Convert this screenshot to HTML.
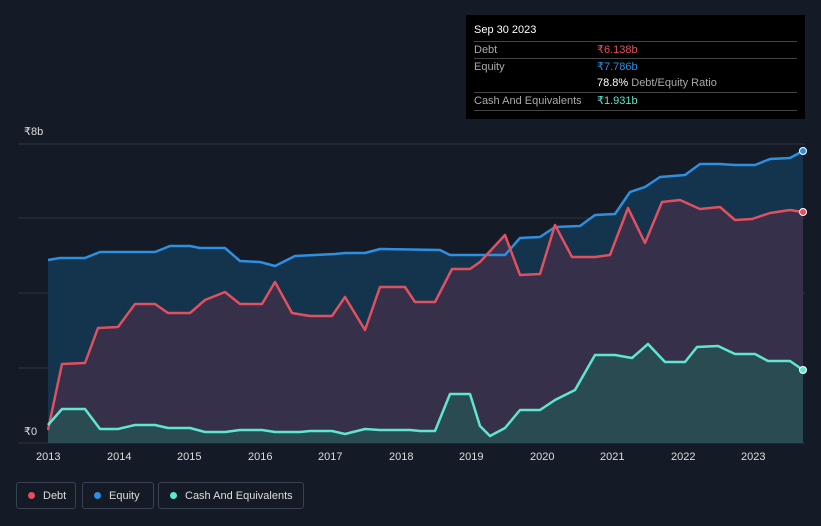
<!DOCTYPE html><html><head><style>
body{margin:0;width:821px;height:526px;background:#151b26;font-family:"Liberation Sans",sans-serif;overflow:hidden;position:relative}
.tt{position:absolute;left:466px;top:15px;width:339px;height:104px;background:#000;color:#fff;font-size:11px}
.tt .r{position:absolute;left:8px;right:8px;border-top:1px solid #444;height:17px;line-height:17px;color:#aaa}
.tt .r b{position:absolute;left:123px;font-weight:normal}
.lg{position:absolute;top:482px;height:27px;border:1px solid #3a4150;border-radius:3px;color:#ddd;font-size:11px;line-height:27px;box-sizing:border-box}
.lg i{display:inline-block;width:7px;height:7px;border-radius:50%;margin:0 8px 0 11px}
.ax{position:absolute;color:#ddd;font-size:11px}
</style></head><body>
<svg width="821" height="526" style="position:absolute;left:0;top:0">
<g stroke="#2c3340" stroke-width="1"><line x1="18" y1="144" x2="805" y2="144"/><line x1="18" y1="218" x2="805" y2="218"/><line x1="18" y1="293" x2="805" y2="293"/><line x1="18" y1="368" x2="805" y2="368"/><line x1="18" y1="443" x2="805" y2="443"/></g>
<polygon fill="#14334d" points="48,443 48,260 60,258 85,258 100,252 155,252 170,246 190,246 200,248 225,248 240,261 260,262 275,266 295,256 335,254 345,253 365,253 380,249 440,250 450,255 505,255 520,238 540,237 555,227 580,226 595,215 615,214 630,192 645,187 660,177 685,175 700,164 720,164 735,165 755,165 770,159 790,158 803,151 803,443"/>
<polygon fill="#36304a" points="48,443 48,430 62,364 85,363 98,328 118,327 135,304 155,304 168,313 190,313 205,300 225,292 240,304 262,304 275,282 292,313 310,316 332,316 345,297 365,330 380,287 405,287 415,302 435,302 452,269 470,269 480,262 505,235 520,275 540,274 555,225 572,257 595,257 610,255 628,208 645,243 662,202 680,200 700,209 720,207 735,220 752,219 770,213 790,210 803,212 803,443"/>
<polygon fill="#2a4b52" points="48,443 48,425 62,409 85,409 100,429 118,429 135,425 155,425 168,428 190,428 205,432 225,432 240,430 262,430 275,432 300,432 310,431 332,431 345,434 365,429 380,430 410,430 420,431 435,431 450,394 470,394 480,426 490,436 505,428 520,410 540,410 555,400 575,390 595,355 615,355 632,358 648,344 665,362 685,362 697,347 718,346 735,354 755,354 768,361 790,361 803,370 803,443"/>
<g fill="none" stroke-width="2.5" stroke-linejoin="round">
<polyline stroke="#2d8fe0" points="48,260 60,258 85,258 100,252 155,252 170,246 190,246 200,248 225,248 240,261 260,262 275,266 295,256 335,254 345,253 365,253 380,249 440,250 450,255 505,255 520,238 540,237 555,227 580,226 595,215 615,214 630,192 645,187 660,177 685,175 700,164 720,164 735,165 755,165 770,159 790,158 803,151"/>
<polyline stroke="#e0505e" points="48,430 62,364 85,363 98,328 118,327 135,304 155,304 168,313 190,313 205,300 225,292 240,304 262,304 275,282 292,313 310,316 332,316 345,297 365,330 380,287 405,287 415,302 435,302 452,269 470,269 480,262 505,235 520,275 540,274 555,225 572,257 595,257 610,255 628,208 645,243 662,202 680,200 700,209 720,207 735,220 752,219 770,213 790,210 803,212"/>
<polyline stroke="#5ee6d0" points="48,425 62,409 85,409 100,429 118,429 135,425 155,425 168,428 190,428 205,432 225,432 240,430 262,430 275,432 300,432 310,431 332,431 345,434 365,429 380,430 410,430 420,431 435,431 450,394 470,394 480,426 490,436 505,428 520,410 540,410 555,400 575,390 595,355 615,355 632,358 648,344 665,362 685,362 697,347 718,346 735,354 755,354 768,361 790,361 803,370"/>
</g>
<circle cx="803" cy="151" r="3.5" fill="#2d8fe0" stroke="#fff"/><circle cx="803" cy="212" r="3.5" fill="#e0505e" stroke="#fff"/><circle cx="803" cy="370" r="3.5" fill="#5ee6d0" stroke="#fff"/>
</svg>
<div class="ax" style="left:24px;top:125px">₹8b</div>
<div class="ax" style="left:24px;top:425px">₹0</div>
<div class="ax" style="top:451px;left:36px">2013</div><div class="ax" style="top:451px;left:107px">2014</div><div class="ax" style="top:451px;left:177px">2015</div><div class="ax" style="top:451px;left:248px">2016</div><div class="ax" style="top:451px;left:318px">2017</div><div class="ax" style="top:451px;left:389px">2018</div><div class="ax" style="top:451px;left:459px">2019</div><div class="ax" style="top:451px;left:530px">2020</div><div class="ax" style="top:451px;left:600px">2021</div><div class="ax" style="top:451px;left:671px">2022</div><div class="ax" style="top:451px;left:741px">2023</div>
<div class="tt">
<div style="position:absolute;left:8px;top:9px;font-size:11px">Sep 30 2023</div>
<div class="r" style="top:26px">Debt<b style="color:#e0505e">₹6.138b</b></div>
<div class="r" style="top:43px">Equity<b style="color:#2d8fe0">₹7.786b</b></div>
<div class="r" style="top:60px;border:none"><b style="color:#fff">78.8% <span style="color:#aaa">Debt/Equity Ratio</span></b></div>
<div class="r" style="top:77px">Cash And Equivalents<b style="color:#5ee6d0">₹1.931b</b></div>
<div class="r" style="top:95px;height:0"></div>
</div>
<div class="lg" style="left:16px;width:60px"><i style="background:#e0505e"></i>Debt</div>
<div class="lg" style="left:82px;width:72px"><i style="background:#2d8fe0"></i>Equity</div>
<div class="lg" style="left:158px;width:146px"><i style="background:#5ee6d0"></i>Cash And Equivalents</div>
</body></html>
